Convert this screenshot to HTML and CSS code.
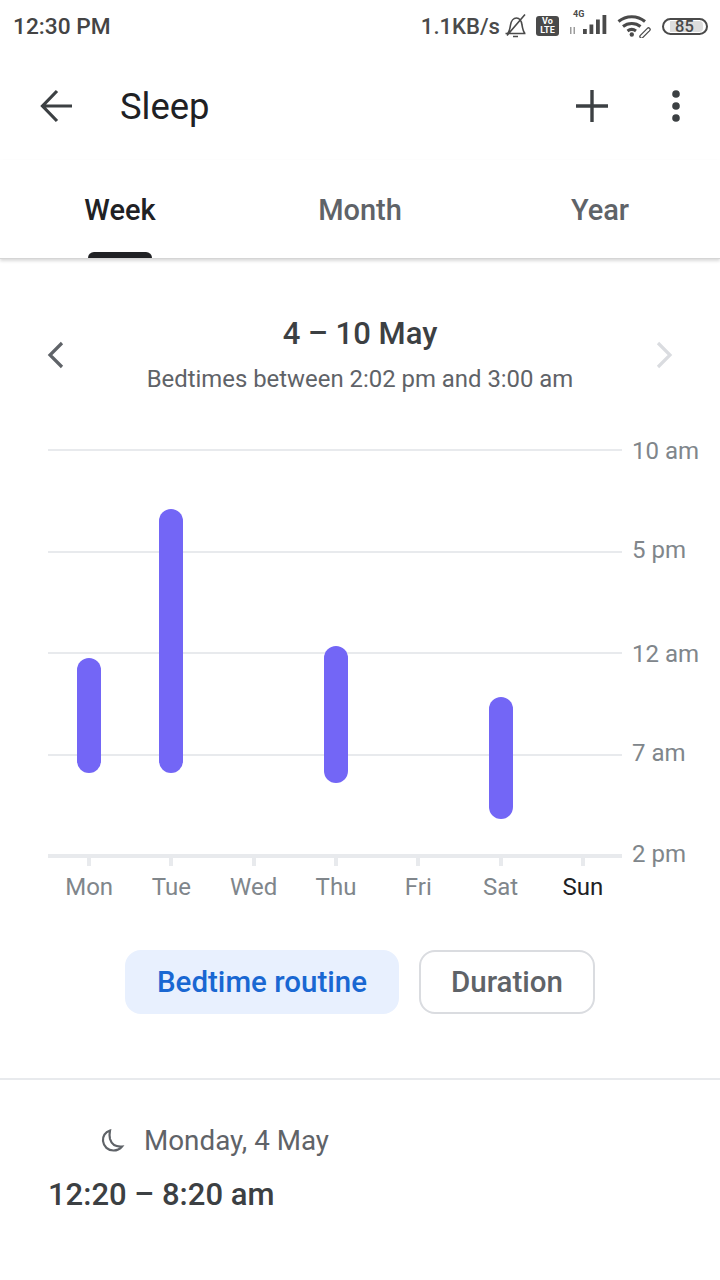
FILE: index.html

```html
<!DOCTYPE html>
<html lang="en">
<head>
  <meta charset="UTF-8" />
  <title>Sleep</title>
  <link rel="stylesheet" href="styles.css">
</head>
<body>

<div class="statusbar">
  <div class="time">12:30 PM</div>
  <div class="status-right">
    <span class="speed">1.1KB/s</span>
    <svg class="ic-bell" width="24" height="26" viewBox="-2 0 24 26" fill="none" stroke="#4a4a4a" stroke-width="1.6">
      <path d="M1.500 20.500h20M3.500 20.500c2-2 2.500-5 3-8.500.6-4 3-7 6-7 3.500 0 5 3.500 5.500 7 .5 3 1 6.500 3 8.500M9 23.500h5M3 22.500L21 1.500"/>
    </svg>
    <span class="volte">Vo<br>LTE</span>
    <span class="signal">
      <span class="four-g">4G</span>
      <svg width="38" height="24" viewBox="0 0 38 24" fill="#4a4a4a">
        <path d="M1 13h1.500v7H1zM4.500 13H6v7H4.500z" opacity=".55"/>
        <rect x="14" y="15" width="3.800" height="5"/><rect x="20.500" y="10.500" width="3.800" height="9.500"/><rect x="27" y="5.500" width="3.800" height="14.500"/><rect x="33.500" y="1" width="3.800" height="19"/>
      </svg>
    </span>
    <svg width="34" height="24" viewBox="0 0 34 24" fill="none" stroke="#4a4a4a" stroke-width="3">
      <path d="M1.500 7.500c7.500-6.500 19-6.500 26.500 0M6 12.500c4.800-4 12.700-4 17.500 0M10.500 17c2.600-2 5.900-2 8.500 0"/>
      <circle cx="14.800" cy="20.500" r="2.200" fill="#4a4a4a" stroke="none"/>
      <path d="M24.500 22.500l7-7" stroke-width="4.500" stroke-linecap="round"/><path d="M24.500 22.500l7-7" stroke="#fff" stroke-width="2" stroke-linecap="round"/>
    </svg>
    <span class="battery"><span class="battery-level">85</span></span>
  </div>
</div>

<div class="toolbar">
  <svg class="back" width="36" height="36" viewBox="0 0 36 36" fill="none" stroke="#3c4043" stroke-width="3.200">
    <path d="M33 18H4M18 3L3.500 18 18 33"/>
  </svg>
  <div class="title">Sleep</div>
  <svg class="plus" width="32" height="32" viewBox="0 0 32 32" fill="none" stroke="#3c4043" stroke-width="3.400">
    <path d="M16 0v32M0 16h32"/>
  </svg>
  <svg class="more" width="12" height="34" viewBox="0 0 12 34" fill="#3c4043">
    <circle cx="6" cy="5" r="3.800"/><circle cx="6" cy="17" r="3.800"/><circle cx="6" cy="29" r="3.800"/>
  </svg>
</div>

<div class="tabs">
  <div class="tab active">Week<span class="tab-mark"></span></div>
  <div class="tab">Month</div>
  <div class="tab">Year</div>
</div>

<div class="range">
  <svg class="chev" width="18" height="28" viewBox="0 0 18 28" fill="none" stroke="#5f6368" stroke-width="3.200"><path d="M16 2L4 14l12 12"/></svg>
  <div class="range-text">
    <div class="range-title">4 – 10 May</div>
    <div class="range-sub">Bedtimes between 2:02 pm and 3:00 am</div>
  </div>
  <svg class="chev" width="18" height="28" viewBox="0 0 18 28" fill="none" stroke="#dadce0" stroke-width="3.200"><path d="M2 2l12 12L2 26"/></svg>
</div>

<div class="chart">
  <div class="grid">
    <div class="grid-row"><span class="line"></span><span class="hour">10 am</span></div>
    <div class="grid-row"><span class="line"></span><span class="hour up">5 pm</span></div>
    <div class="grid-row"><span class="line"></span><span class="hour">12 am</span></div>
    <div class="grid-row"><span class="line"></span><span class="hour up">7 am</span></div>
    <div class="grid-row"><span class="line base"></span><span class="hour up">2 pm</span></div>
  </div>
  <div class="days">
    <div class="day"><span class="bar" style="top:208px;height:115px"></span><span class="tick"></span><span class="day-name">Mon</span></div>
    <div class="day"><span class="bar" style="top:59px;height:264px"></span><span class="tick"></span><span class="day-name">Tue</span></div>
    <div class="day"><span class="tick"></span><span class="day-name">Wed</span></div>
    <div class="day"><span class="bar" style="top:196px;height:137px"></span><span class="tick"></span><span class="day-name">Thu</span></div>
    <div class="day"><span class="tick"></span><span class="day-name">Fri</span></div>
    <div class="day"><span class="bar" style="top:247px;height:122px"></span><span class="tick"></span><span class="day-name">Sat</span></div>
    <div class="day"><span class="tick"></span><span class="day-name today">Sun</span></div>
  </div>
</div>

<div class="chips">
  <div class="chip selected">Bedtime routine</div>
  <div class="chip">Duration</div>
</div>

<div class="detail">
  <div class="detail-date">
    <svg width="26" height="26" viewBox="0 0 26 26" fill="none" stroke="#5f6368" stroke-width="2.200">
      <path d="M10 2.500C5 4 2.500 8.500 3 13c.6 5.500 5 9.500 10.500 9.500 3.500 0 6.500-1.500 8.500-4-6 .5-10.500-2.500-12-7.500-.8-3-.5-6 0-8.500z"/>
    </svg>
    <span>Monday, 4 May</span>
  </div>
  <div class="detail-time">12:20 – 8:20 am</div>
</div>

</body>
</html>
```

FILE: styles.css

```css
* { box-sizing: border-box; }
body { margin: 0; width: 720px; height: 1280px; overflow: hidden; background: #fff; font-family: Roboto, sans-serif; color: #3c4043; }

.statusbar { height: 52px; display: flex; align-items: center; justify-content: space-between; padding: 0 12px 0 13px; }
.time { font-size: 22.700px; font-weight: 500; color: #444; }
.status-right { display: flex; align-items: center; gap: 10px; color: #4a4a4a; }
.speed { font-size: 22.100px; font-weight: 500; margin-right: -8px; }
.volte { width: 23px; height: 20px; background: #4a4a4a; color: #fff; border-radius: 3px; font-size: 9px; line-height: 9px; font-weight: 700; text-align: center; padding-top: 1px; }
.signal { position: relative; display: flex; }
.four-g { position: absolute; left: 4px; top: -5px; font-size: 9px; font-weight: 700; }
.battery { width: 46px; height: 17px; border: 2px solid #4a4a4a; border-radius: 9px; padding: 1px 1px 1px 6px; display: flex; margin-left: 1px; }
.battery-level { width: 33px; background: #ddd; font-size: 16.500px; line-height: 11px; font-weight: 500; padding-left: 5px; border-radius: 0 4px 4px 0; }

.toolbar { height: 108px; display: flex; align-items: center; padding: 0 38px 0 39px; }
.back { flex: none; }
.title { flex: 1; margin-left: 45px; font-size: 36.400px; color: #202124; }
.plus { margin-right: 62px; }

.tabs { height: 99px; display: flex; border-bottom: 1px solid #d5d5d5; box-shadow: 0 2px 3px rgba(0,0,0,.15); }
.tab { position: relative; width: 240px; text-align: center; font-size: 29px; line-height: 100px; font-weight: 500; color: #5f6368; }
.tab.active { color: #202124; }
.tab-mark { position: absolute; left: 88px; bottom: 0; width: 64px; height: 6px; background: #202124; border-radius: 6px 6px 0 0; }

.range { display: flex; justify-content: space-between; align-items: center; padding: 55px 46px 0; }
.range-text { text-align: center; }
.range-title { font-size: 31px; font-weight: 500; color: #3c4043; line-height: 40px; }
.range-sub { font-size: 23.900px; color: #5f6368; line-height: 32px; margin-top: 9px; }

.chart { position: relative; height: 500px; margin-top: 55px; }
.grid { position: absolute; left: 48px; right: 0; top: -1px; height: 408px; display: flex; flex-direction: column; justify-content: space-between; }
.grid-row { height: 2px; display: flex; align-items: center; }
.line { width: 574px; height: 2px; background: #e8eaed; }
.line.base { height: 4px; }
.hour { margin-left: 10px; font-size: 24px; color: #80868b; white-space: nowrap; padding-top: 2px; }
.hour.up { padding-top: 0; margin-bottom: 4px; }
.days { position: absolute; left: 48px; top: 0; width: 576px; height: 100%; display: grid; grid-template-columns: repeat(7, 1fr); }
.day { position: relative; }
.bar { position: absolute; left: 50%; width: 24px; margin-left: -12px; background: #7366f6; border-radius: 12px; }
.tick { position: absolute; left: 50%; top: 408px; width: 4px; margin-left: -2px; height: 8px; background: #e8eaed; }
.day-name { position: absolute; left: 0; right: 0; top: 423px; text-align: center; font-size: 24px; color: #80868b; }
.day-name.today { color: #202124; }

.chips { display: flex; justify-content: center; gap: 20px; }
.chip { height: 64px; padding: 0 30px; border: 2px solid #dadce0; border-radius: 16px; font-size: 29.500px; font-weight: 500; line-height: 60px; color: #5f6368; }
.chip.selected { background: #e8f0fe; border-color: #e8f0fe; color: #1967d2; }

.detail { margin-top: 64px; border-top: 2px solid #e8eaed; padding: 44px 48px 0; }
.detail-date { display: flex; align-items: center; gap: 18px; padding-left: 52px; font-size: 27.800px; color: #5f6368; }
.detail-time { margin-top: 19px; font-size: 31px; font-weight: 500; color: #3c4043; }
```
